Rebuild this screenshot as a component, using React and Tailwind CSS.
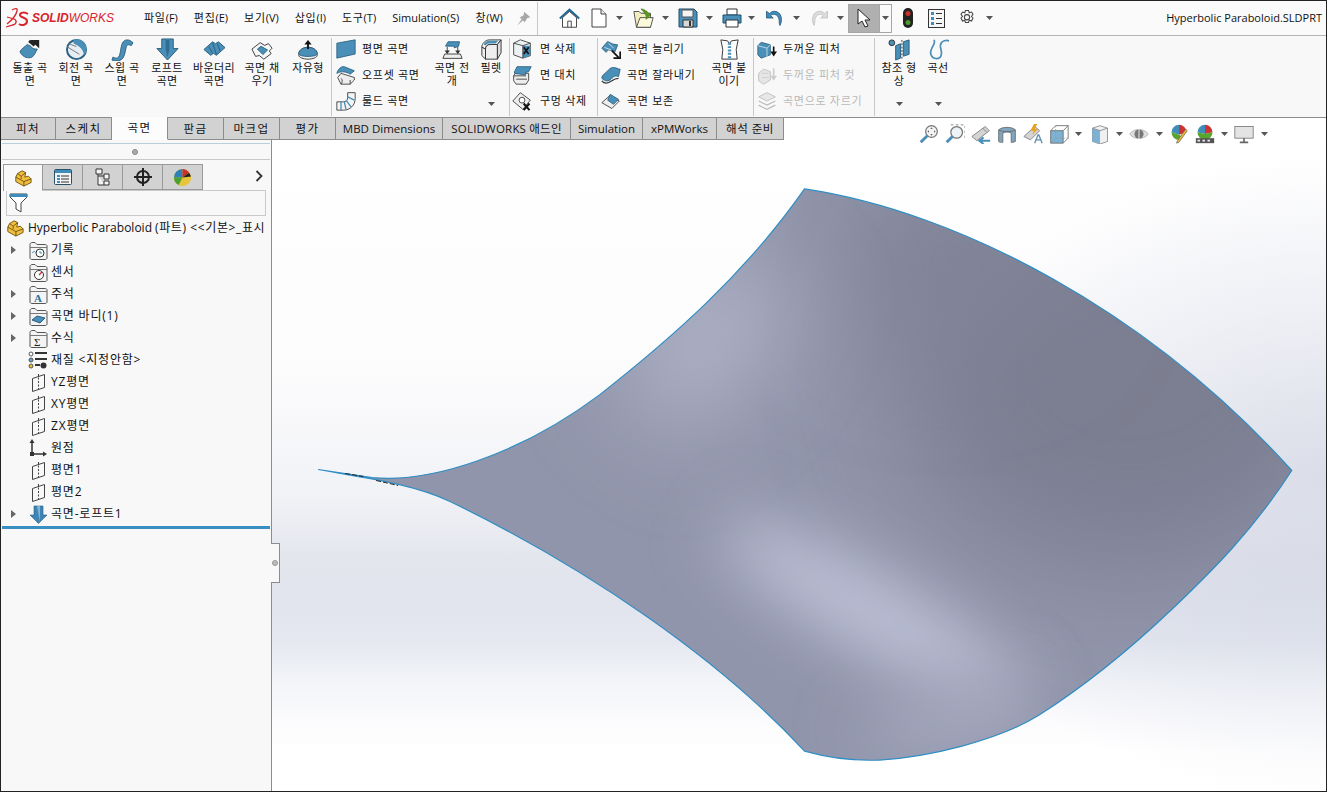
import React from "react";

const font = { fontFamily: '"Open Sans", "Noto Sans CJK KR", sans-serif' };

const Caret = ({ className = "" }) => (
  <svg width="7" height="4" viewBox="0 0 7 4" className={`shrink-0 ${className}`}>
    <path d="M0 0h7L3.5 4z" fill="#555" />
  </svg>
);

const Ico = ({ size = 20, children, className = "" }) => (
  <svg width={size} height={size} viewBox="0 0 24 24" className={`shrink-0 ${className}`}>
    {children}
  </svg>
);

const B = "#4a8fb8";
const BD = "#2a5f80";
const K = "#333";

// ribbon icons
const icons = {
  extrude: (
    <Ico size={22}>
      <path d="M1 14c2-4 5-5 8-8l4 2c1 3 5 3 7 3-2 3-3 7-6 9-4 1-9 1-13-6z" fill={B} stroke={BD} />
      <path d="M12 1l10 9V1z" fill="#222" />
      <path d="M11 2l6 5" stroke="#222" strokeWidth="3" />
    </Ico>
  ),
  revolve: (
    <Ico size={23}>
      <circle cx="12" cy="12" r="10" fill="#e6eef3" stroke={BD} strokeWidth="2" />
      <path d="M9 2a10 10 0 0 1 11 16c-1-6-5-10-11-12z" fill={B} />
      <path d="M2 9l13 8M4 6l8 3" stroke="#777" />
    </Ico>
  ),
  sweep: (
    <Ico size={23}>
      <path d="M2 20c6 3 7-1 8-7s2-11 7-11c2 0 4 1 6 3l-2 3c-2-1-4-2-5 1s-1 7-3 11-8 5-12 3z" fill={B} stroke={BD} />
    </Ico>
  ),
  loft: (
    <Ico size={23}>
      <path d="M6 1h12v10h5L12 23 1 11h5z" fill={B} stroke={BD} />
      <path d="M10 2v10l2 8 2-8V2" fill="#2f6d93" />
    </Ico>
  ),
  boundary: (
    <Ico size={23}>
      <path d="M1 12l9-8 3 2 3-2 7 6-9 8-3-2-3 2z" fill={B} stroke={BD} />
      <path d="M10 5l4 12M15 6l3 8M6 9l4 7" stroke={BD} />
    </Ico>
  ),
  fill: (
    <Ico size={22}>
      <path d="M1 11l9-7 5 3 4-2 4 5-3 3 2 3-8 6-5-4-4 1z" fill="#f6f6f6" stroke={K} />
      <path d="M7 11l4-3 7 4-5 5z" fill={B} stroke={BD} />
    </Ico>
  ),
  freeform: (
    <Ico size={22}>
      <path d="M2 16c0-4 5-7 10-7s10 3 10 7v2c0 2-5 4-10 4S2 20 2 18z" fill="#f2f2f2" stroke={K} />
      <path d="M2 16c0-4 5-7 10-7s10 3 10 7c0 2-5 3-10 3S2 18 2 16z" fill={B} stroke={BD} />
      <path d="M12 11V4" stroke="#111" strokeWidth="2" />
      <path d="M8 6l4-5 4 5z" fill="#111" />
    </Ico>
  ),
  planar: (
    <Ico size={20}>
      <path d="M1 5l22-4v17L1 23z" fill={B} stroke={BD} />
    </Ico>
  ),
  offset: (
    <Ico size={20}>
      <path d="M2 15l4-5 16 5v3l-5 5H6z" fill="#eee" stroke={K} />
      <path d="M6 16c2 2 2 4 0 7M17 18v5" fill="none" stroke={K} />
      <path d="M1 10c1-5 6-9 9-8l12 5-5 4c-5-3-10-4-16-1z" fill={B} stroke={BD} />
    </Ico>
  ),
  ruled: (
    <Ico size={20}>
      <path d="M1 13h8c3 0 5-2 5-5V2h9v7c0 8-6 14-14 14H1z" fill="#f4f4f4" stroke={K} />
      <path d="M6 13v10M10 13l2 9M12 11l6 8M14 7l8 4" stroke={B} strokeWidth="1.6" />
    </Ico>
  ),
  flatten: (
    <Ico size={21}>
      <path d="M4 7l3-5h13l-1 5-5 2v-2z" fill={B} stroke={BD} />
      <path d="M3 16h18l2 5H1z" fill="#eee" stroke={K} />
      <path d="M6 8v7M18 8v7" stroke={K} />
      <path d="M3 12l3 4 3-4zM15 12l3 4 3-4z" fill={K} />
    </Ico>
  ),
  fillet: (
    <Ico size={22}>
      <path d="M2 9c0-4 4-8 8-8h13l-4 5H11c-3 0-5 2-5 5z" fill="#f4f4f4" stroke={K} />
      <path d="M2 9l4 2v11l-4-4zM6 11c0-3 2-5 5-5h8v16H6z" fill="#eee" stroke={K} />
      <path d="M19 6l4-5v14l-4 7z" fill="#ddd" stroke={K} />
      <path d="M4 6c1-2 3-4 6-4h10l-3 3h-7c-2 0-3 1-4 2z" fill={B} />
    </Ico>
  ),
  delFace: (
    <Ico size={20}>
      <path d="M2 5l8-4 12 4v15l-9 3-11-4z" fill="#eef1f4" stroke={K} />
      <path d="M13 8h9v12l-9 3z" fill={B} />
      <path d="M14 10l6 8M20 10l-6 8" stroke="#111" strokeWidth="2" />
      <path d="M2 5l11 3v15M13 8l9-3" fill="none" stroke={K} />
    </Ico>
  ),
  replaceFace: (
    <Ico size={20}>
      <path d="M2 13l2-3h16v8l-3 5H5l-3-4z" fill="#eee" stroke={K} />
      <path d="M2 13h15M5 17h13" stroke={K} />
      <path d="M3 8l3-6h17l-3 6-4 1v3L3 10z" fill={B} stroke={BD} />
    </Ico>
  ),
  delHole: (
    <Ico size={20}>
      <path d="M1 12l9-10 12 9-9 11z" fill="#eee" stroke={K} />
      <circle cx="12" cy="11" r="3.5" fill="#fff" stroke={K} />
      <path d="M14 15l7 8M21 15l-7 8" stroke="#111" strokeWidth="2.4" />
    </Ico>
  ),
  extend: (
    <Ico size={20}>
      <path d="M1 11l7-8 6 3 6 1-3 8-8-2-3 3z" fill={B} stroke={BD} />
      <path d="M4 10l8 3M9 5l6 6" stroke="#dfeaf1" />
      <path d="M13 14l8 8M23 15v8h-8" fill="none" stroke="#111" strokeWidth="2" />
    </Ico>
  ),
  trim: (
    <Ico size={20}>
      <path d="M1 16c0-4 3-5 6-8s4-5 8-5 5 2 8 2l-2 9c-4-2-6 0-9 3s-7 3-11-1z" fill={B} stroke={BD} />
      <path d="M1 19c4 5 8 3 12 0s5-3 8-3" fill="none" stroke={K} strokeWidth="1.5" />
    </Ico>
  ),
  untrim: (
    <Ico size={20}>
      <path d="M1 14l9-8 12 6-9 9z" fill="#eee" stroke={K} />
      <path d="M11 4l10 6-6 6-7-5z" fill={B} stroke={BD} />
    </Ico>
  ),
  knit: (
    <Ico size={23}>
      <path d="M3 2l7 1 2 3 2-3 7-1-2 10 1 10H4l1-10z" fill="#fff" stroke={K} />
      <path d="M12 5v18" stroke={B} strokeWidth="3.5" strokeDasharray="2 1.5" />
    </Ico>
  ),
  thicken: (
    <Ico size={20}>
      <path d="M1 8l4-4 11 3v12l-11 4-4-4z" fill={B} stroke={BD} />
      <path d="M1 8l11 3 4-4M12 11v11" fill="none" stroke="#cfe0ea" />
      <path d="M20 9v9" stroke="#111" strokeWidth="2" />
      <path d="M16 15h8l-4 6z" fill="#111" />
    </Ico>
  ),
  thickenCut: (
    <Ico size={20}>
      <path d="M2 10l6-5 8 3v10l-8 5-6-4z" fill="#e6e6e6" stroke="#bbb" />
      <path d="M6 10h8M6 15h8" stroke="#ccc" />
      <path d="M20 4v11" stroke="#ccc" strokeWidth="2" />
      <path d="M16 13h8l-4 6z" fill="#ccc" />
    </Ico>
  ),
  cutSurface: (
    <Ico size={20}>
      <path d="M2 7l10-5 10 5-10 5z" fill="#e8e8e8" stroke="#bbb" />
      <path d="M2 12l10 5 10-5M2 17l10 5 10-5" fill="none" stroke="#bbb" strokeWidth="1.5" />
    </Ico>
  ),
  refGeom: (
    <Ico size={23}>
      <circle cx="4" cy="5" r="3" fill={B} stroke={K} />
      <path d="M8 8l5-2v15l-5 2zM16 4l6-2v15l-6 2z" fill={B} stroke={BD} />
      <path d="M14.500 2v21" stroke={K} strokeDasharray="2 1.500" />
    </Ico>
  ),
  curve: (
    <Ico size={23}>
      <path d="M7 2c4 3-5 9-3 15 2 6 10 6 11 0 1-5-3-8 0-12 1-2 5-3 8-2" fill="none" stroke={B} strokeWidth="1.800" />
    </Ico>
  ),
};

const Logo = () => (
  <div className="flex items-center gap-[2px] ml-[4px] w-[121px] shrink-0">
    <svg width="25" height="22" viewBox="0 0 25 22">
      <path d="M7 3c3-2 6-2 5 1-1 4-5 9-10 13M2 10l7 2c3 1 3 5-1 6l-7 2" fill="none" stroke="#d8232a" strokeWidth="1.3" />
      <path d="M23 7c-3-2-8-2-8 1s7 2 7 6-5 5-8 3" fill="none" stroke="#d8232a" strokeWidth="2" />
    </svg>
    <span
      className="text-[12px] font-bold text-[#d8232a] italic whitespace-nowrap"
      style={{ fontFamily: '"Liberation Sans", sans-serif' }}
    >
      SOLID<span className="font-normal">WORKS</span>
    </span>
  </div>
);

const menus = [
  ["파일", "(F)", "tracking-[0.7px]"],
  ["편집", "(E)", "tracking-[0.7px]"],
  ["보기", "(V)", "tracking-[0.7px]"],
  ["삽입", "(I)", "tracking-[0.7px]"],
  ["도구", "(T)", "tracking-[0.7px]"],
  ["Simulation", "(S)", ""],
  ["창", "(W)", "tracking-[0.7px]"],
];

const ToolBtn = ({ children, caret, gap = "ml-[5px]" }) => (
  <div className="flex items-center shrink-0">
    {children}
    {caret && <Caret className={gap} />}
  </div>
);

const TitleBar = () => (
  <div className="flex items-center h-[35px] border-b border-[#b4b4b4] bg-[#fafafa] shrink-0">
    <Logo />
    <div className="flex items-center gap-4 ml-[18px] text-[11px] text-[#111] whitespace-nowrap">
      {menus.map(([a, b, t]) => (
        <span key={a}>
          <span className={t}>{a}</span>
          <span>{b}</span>
        </span>
      ))}
    </div>
    <svg width="15" height="15" viewBox="0 0 24 24" className="ml-[13px] shrink-0">
      <path d="M13 1l10 9-5 1-4 7-3-3-9 8 7-10-3-3 6-3z" fill="#a8a8a8" />
    </svg>
    <div className="w-px h-[33px] bg-[#c8c8c8] ml-[6px]" />
    <div className="flex items-center ml-[21px] h-full">
      <ToolBtn>
        <svg width="21" height="21" viewBox="0 0 24 24">
          <path d="M1 12L12 2l11 10" fill="none" stroke="#1e6a94" strokeWidth="2.5" />
          <path d="M4 11v11h16V11L12 4z" fill="#fff" stroke="#333" />
          <path d="M10 22v-7h4v7" fill="none" stroke="#333" />
        </svg>
      </ToolBtn>
      <div className="ml-[10px]">
        <ToolBtn caret gap="ml-[8px]">
          <svg width="18" height="20" viewBox="0 0 18 20">
            <path d="M2 1h9l5 5v13H2z" fill="#fff" stroke="#444" />
            <path d="M11 1v5h5" fill="#eee" stroke="#444" />
          </svg>
        </ToolBtn>
      </div>
      <div className="ml-[10px]">
        <ToolBtn caret gap="ml-[8px]">
          <svg width="21" height="21" viewBox="0 0 24 24">
            <path d="M1 4h6l2 2h11v16H4z" fill="#f3eec0" stroke="#444" />
            <path d="M4 22l4-11h15l-3 11z" fill="#fbf8dc" stroke="#444" />
            <path d="M9 1c4 0 6 2 6 4V3l5 5-5 5v-3c0-2-2-5-6-9z" fill="#5a9a1a" stroke="#3b7010" strokeWidth=".6" />
          </svg>
        </ToolBtn>
      </div>
      <div className="ml-[9px]">
        <ToolBtn caret gap="ml-[8px]">
          <svg width="20" height="20" viewBox="0 0 20 20">
            <path d="M1 1h15l3 3v15H1z" fill="#4a8fb8" stroke="#1d4f6f" />
            <path d="M4 2h11v7H4z" fill="#f4f4f4" stroke="#555" />
            <path d="M5 12h10v7H5z" fill="#d8d8d8" stroke="#333" />
            <path d="M11 13v5h2v-5z" fill="#333" />
          </svg>
        </ToolBtn>
      </div>
      <div className="ml-[9px]">
        <ToolBtn caret gap="ml-[6px]">
          <svg width="20" height="20" viewBox="0 0 20 20">
            <path d="M5 1h10v6H5z" fill="#fff" stroke="#333" />
            <path d="M1 7h18v8H1z" fill="#4a8fb8" stroke="#1d4f6f" />
            <path d="M4 12h12v7H4z" fill="#fff" stroke="#333" />
          </svg>
        </ToolBtn>
      </div>
      <div className="ml-[10px]">
        <ToolBtn caret gap="ml-[10px]">
          <svg width="18" height="18" viewBox="0 0 24 24">
            <path d="M2 3v9h9L7.5 9C11 5 20 7 19 19l1 3c4-8 2-18-7-19-3 0-5 1-7 3z" fill="#3f8dbb" stroke="#1d4f6f" />
          </svg>
        </ToolBtn>
      </div>
      <div className="ml-[11px]">
        <ToolBtn caret gap="ml-[8px]">
          <svg width="18" height="18" viewBox="0 0 24 24">
            <path d="M22 3v9h-9l3.5-3C13 5 4 7 5 19l-1 3C0 14 2 4 11 3c3 0 5 1 7 3z" fill="#dcdcdc" stroke="#bdbdbd" />
          </svg>
        </ToolBtn>
      </div>
      <div className="flex items-center ml-[4px] h-[29px] border border-[#a6a6a6]">
        <div className="w-[30px] h-full bg-[#b0b0b0] flex items-center justify-center">
          <svg width="14" height="20" viewBox="0 0 14 20">
            <path d="M1 1v15l4-3 3 6 3-1-3-6h5z" fill="#fff" stroke="#222" />
          </svg>
        </div>
        <div className="w-[12px] flex justify-center border-l border-[#a6a6a6] h-full items-center">
          <Caret />
        </div>
      </div>
      <svg width="12" height="22" viewBox="0 0 12 22" className="ml-[10px]">
        <rect x="1" y="1" width="10" height="20" rx="5" fill="#222" />
        <circle cx="6" cy="6.5" r="2.5" fill="#c8312a" />
        <circle cx="6" cy="15.5" r="2.5" fill="#4d9a2a" />
      </svg>
      <svg width="17" height="19" viewBox="0 0 17 19" className="ml-[14px]">
        <rect x=".5" y=".5" width="16" height="18" fill="#f6f6f6" stroke="#333" />
        <path d="M3 3h3v3H3zM3 8h3v3H3zM3 13h3v3H3z" fill="#3f8dbb" />
        <path d="M8 4.500h6M8 9.500h6M8 14.500h6" stroke="#333" />
      </svg>
      <svg width="18" height="18" viewBox="0 0 24 24" className="ml-[13px]" fill="none" stroke="#444" strokeWidth="1.4">
        <path d="M10 2h4l1 3 3-1 2 3-2 3 2 2-2 4-3-1-1 3h-4l-1-3-3 1-2-4 2-2-2-3 2-3 3 1z" />
        <circle cx="12" cy="11" r="3.500" />
      </svg>
      <Caret className="ml-[10px]" />
    </div>
    <span className="ml-auto mr-[4px] text-[11px] text-[#111] whitespace-nowrap">Hyperbolic Paraboloid.SLDPRT</span>
  </div>
);

const Col = ({ icon, lines, w = "w-[46px]" }) => (
  <div className={`flex flex-col items-center shrink-0 ${w}`}>
    <div className="h-[24px] flex items-end justify-center">{icon}</div>
    <div className="text-[11px] leading-[13px] text-center tracking-[0.4px] whitespace-nowrap text-[#111]">
      {lines.map((l) => (
        <div key={l}>{l}</div>
      ))}
    </div>
  </div>
);

const Row = ({ icon, label, off, gap = "gap-[5px]" }) => (
  <div className={`flex items-center h-[26px] ${gap}`}>
    <div className="w-[22px] flex justify-center">{icon}</div>
    <span className={`text-[11px] tracking-[0.7px] whitespace-nowrap ${off ? "text-[#b9b9b9]" : "text-[#111]"}`}>{label}</span>
  </div>
);

const Sep = () => <div className="w-px h-[78px] bg-[#c8c8c8] self-center shrink-0" />;

const Ribbon = () => (
  <div className="flex h-[82px] bg-[#f8f8f8] shrink-0 border-b border-[#8c8c8c]">
    <div className="flex pl-[6px] pt-[1px] w-[330px] shrink-0">
      <Col icon={icons.extrude} lines={["돌출 곡", "면"]} />
      <Col icon={icons.revolve} lines={["회전 곡", "면"]} />
      <Col icon={icons.sweep} lines={["스윕 곡", "면"]} />
      <Col icon={icons.loft} lines={["로프트", "곡면"]} w="w-[44px]" />
      <Col icon={icons.boundary} lines={["바운더리", "곡면"]} w="w-[50px]" />
      <Col icon={icons.fill} lines={["곡면 채", "우기"]} />
      <Col icon={icons.freeform} lines={["자유형"]} />
    </div>
    <Sep />
    <div className="flex w-[177px] shrink-0 pl-[3px]">
      <div className="flex flex-col w-[93px] shrink-0">
        <Row icon={icons.planar} label="평면 곡면" />
        <Row icon={icons.offset} label="오프셋 곡면" />
        <Row icon={icons.ruled} label="룰드 곡면" />
      </div>
      <div className="flex pt-[1px] ml-[1px]">
        <Col icon={icons.flatten} lines={["곡면 전", "개"]} />
        <div className="flex flex-col items-center w-[32px] shrink-0">
          <Col icon={icons.fillet} lines={["필렛"]} w="w-[32px]" />
          <Caret className="mt-[28px]" />
        </div>
      </div>
    </div>
    <Sep />
    <div className="flex flex-col w-[87px] shrink-0 pl-[1px]">
      <Row icon={icons.delFace} label="면 삭제" gap="gap-[7px]" />
      <Row icon={icons.replaceFace} label="면 대치" gap="gap-[7px]" />
      <Row icon={icons.delHole} label="구멍 삭제" gap="gap-[7px]" />
    </div>
    <Sep />
    <div className="flex w-[155px] shrink-0 pl-[2px]">
      <div className="flex flex-col w-[106px] shrink-0">
        <Row icon={icons.extend} label="곡면 늘리기" />
        <Row icon={icons.trim} label="곡면 잘라내기" />
        <Row icon={icons.untrim} label="곡면 보존" />
      </div>
      <div className="pt-[1px]">
        <Col icon={icons.knit} lines={["곡면 붙", "이기"]} />
      </div>
    </div>
    <Sep />
    <div className="flex flex-col w-[120px] shrink-0 pl-[2px]">
      <Row icon={icons.thicken} label="두꺼운 피처" />
      <Row icon={icons.thickenCut} label="두꺼운 피처 컷" off />
      <Row icon={icons.cutSurface} label="곡면으로 자르기" off />
    </div>
    <Sep />
    <div className="flex pl-[2px] pt-[1px]">
      <div className="flex flex-col items-center w-[44px]">
        <Col icon={icons.refGeom} lines={["참조 형", "상"]} />
        <Caret className="mt-[15px]" />
      </div>
      <div className="flex flex-col items-center w-[34px]">
        <Col icon={icons.curve} lines={["곡선"]} w="w-[34px]" />
        <Caret className="mt-[28px]" />
      </div>
    </div>
  </div>
);

const tabs = [
  ["피처", "w-[55px] tracking-[1.5px]"],
  ["스케치", "w-[56px] tracking-[1.5px]"],
  ["곡면", "w-[56px] tracking-[1.5px]", true],
  ["판금", "w-[56px] tracking-[1.5px]"],
  ["마크업", "w-[56px] tracking-[1.5px]"],
  ["평가", "w-[56px] tracking-[1.5px]"],
  ["MBD Dimensions", "w-[107px]"],
  ["SOLIDWORKS 애드인", "w-[128px] tracking-[0.2px]"],
  ["Simulation", "w-[72px]"],
  ["xPMWorks", "w-[74px]"],
  ["해석 준비", "w-[67px] tracking-[0.5px]"],
];

const Hud = () => (
  <div className="ml-auto flex items-center gap-[6px] mr-[58px] mt-[6px] h-[20px] shrink-0">
    <svg width="20" height="20" viewBox="0 0 24 24">
      <circle cx="15" cy="9" r="7" fill="#f4f4f4" stroke="#777" strokeWidth="1.5" />
      <path d="M10 14l-8 8" stroke="#4a8fb8" strokeWidth="3.500" />
      <path d="M15 4l-1.500 2h3zM15 14l-1.500-2h3zM10 9l2-1.500v3zM20 9l-2-1.500v3z" fill="#666" />
    </svg>
    <svg width="20" height="20" viewBox="0 0 24 24">
      <path d="M7 1h17v17" fill="none" stroke="#777" strokeDasharray="3 3" />
      <circle cx="14" cy="10" r="7" fill="#eef3f7" stroke="#777" strokeWidth="1.5" />
      <path d="M9 15l-7 7" stroke="#4a8fb8" strokeWidth="3.500" />
    </svg>
    <svg width="20" height="20" viewBox="0 0 24 24">
      <path d="M1 15L17 3l5 5L7 20z" fill="#d4d4d4" stroke="#777" />
      <path d="M14 5l5 5" stroke="#777" />
      <path d="M10 20h13M15 16l-5 4 5 4" stroke="#4a8fb8" strokeWidth="2.500" fill="none" />
    </svg>
    <svg width="20" height="20" viewBox="0 0 24 24">
      <path d="M2 7c4-4 16-4 20 0v14c-2 1-4 1-5 1V11c-3-2-7-2-10 0v11c-2 0-4 0-5-1z" fill="#7fa6c0" stroke="#666" />
      <path d="M2 7c4 3 16 3 20 0" fill="none" stroke="#666" />
    </svg>
    <svg width="20" height="20" viewBox="0 0 24 24">
      <path d="M1 15L14 3l6 5L9 19z" fill="#d4d4d4" stroke="#777" />
      <path d="M13 0l-4 8h4l-2 5 7-7h-4l3-6z" fill="#e9a21d" />
      <path d="M14 23l4-10h1l4 10M15.500 19h6" fill="none" stroke="#5d8fb0" strokeWidth="1.600" />
    </svg>
    <svg width="20" height="20" viewBox="0 0 24 24">
      <path d="M2 8h15v15H2z" fill="#7db2d4" stroke="#666" />
      <path d="M2 8l6-6h15v15l-6 6M17 8l6-6" fill="none" stroke="#666" />
      <path d="M8 2v15h15M8 17l-6 6" fill="none" stroke="#999" strokeDasharray="2 2" />
    </svg>
    <Caret className="mr-[2px]" />
    <svg width="20" height="20" viewBox="0 0 24 24">
      <path d="M3 5l9-3 9 3v16l-9 3-9-3z" fill="#eef0f2" stroke="#888" />
      <path d="M3 5l9 3v16l-9-3z" fill="#7db2d4" />
      <path d="M3 5l9 3 9-3" fill="none" stroke="#888" />
    </svg>
    <Caret />
    <svg width="20" height="20" viewBox="0 0 24 24">
      <path d="M1 12c4-7 18-7 22 0-4 7-18 7-22 0z" fill="#dedede" stroke="#aaa" />
      <circle cx="12" cy="12" r="5.500" fill="#777" />
      <path d="M12 3v18" stroke="#fff" strokeWidth="1" />
    </svg>
    <Caret className="ml-[1px]" />
    <svg width="20" height="20" viewBox="0 0 24 24">
      <path d="M12 1a9 9 0 0 1 9 9l-9 3z" fill="#c33" />
      <path d="M12 1a9 9 0 0 0-9 9l9 3z" fill="#3f8dbb" />
      <path d="M3 10a9 9 0 0 0 9 9l3-4-3-2z" fill="#58a52c" />
      <path d="M22 8L12 22l-3 1 1-3L20 6z" fill="#e6b63a" stroke="#555" strokeWidth=".7" />
    </svg>
    <svg width="20" height="20" viewBox="0 0 24 24">
      <path d="M12 1a9 9 0 0 1 9 9l-9 2z" fill="#c33" />
      <path d="M12 1a9 9 0 0 0-9 9l9 2z" fill="#3f8dbb" />
      <path d="M3 10a9 9 0 0 0 18 0l-9 2z" fill="#58a52c" />
      <path d="M1 17h22v6H1z" fill="#555" />
      <path d="M3 19h3v2H3zM9 19h3v2H9zM15 19h3v2h-3z" fill="#eee" />
    </svg>
    <Caret />
    <svg width="20" height="20" viewBox="0 0 24 24">
      <rect x="1" y="3" width="22" height="14" fill="#e4e4e4" stroke="#777" />
      <path d="M12 17v4M7 22h10" stroke="#666" strokeWidth="2" />
    </svg>
    <Caret className="ml-[1px]" />
  </div>
);

const TabRow = () => (
  <div className="flex h-[22px] bg-white shrink-0 text-[11.5px] text-[#111] relative z-10">
    {tabs.map(([label, w, active]) => (
      <div
        key={label}
        className={`${w} shrink-0 flex items-center justify-center border-r border-b border-[#8c8c8c] whitespace-nowrap -mt-px ${
          active ? "bg-[#fcfcfc] border-b-transparent" : "bg-[#d2d2d2] border-t"
        }`}
      >
        {label}
      </div>
    ))}
    <Hud />
  </div>
);

const FolderIco = ({ children }) => (
  <svg width="19" height="19" viewBox="0 0 19 19">
    <path d="M1 3.500c0-1 1-2 2-2h3l2 2h8c1 0 2 .5 2 1.500v12c0 1-1 1.500-2 1.500H3c-1 0-2-.5-2-1.500z" fill="#f4f4f4" stroke="#555" />
    <path d="M1 6.500h17" stroke="#777" />
    {children}
  </svg>
);

const PlaneIco = () => (
  <svg width="15" height="19" viewBox="0 0 15 19">
    <path d="M1.500 5.500l12-4v13l-12 4z" fill="none" stroke="#444" />
    <path d="M7.500 1v17" stroke="#444" strokeDasharray="2 1.500" />
  </svg>
);

const Part = ({ size = 19 }) => (
  <svg width={size} height={size} viewBox="0 0 20 20">
    <path d="M2 9L4 5l5-3 4 2-1 5 4-1 3 3v4l-8 4-9-5z" fill="#f1bf3d" stroke="#6b5012" strokeLinejoin="round" />
    <path d="M2 9l9 5 8-3M11 14v5M4 5l4 3 5-4M8 8v3" fill="none" stroke="#6b5012" />
  </svg>
);

const treeItems = [
  { label: "기록", arrow: true, icon: <FolderIco><circle cx="11" cy="12" r="4" fill="#fff" stroke="#333" /><path d="M11 10v2h2M3 12c2-2 3-2 4 0" stroke="#3f8dbb" fill="none" /></FolderIco> },
  { label: "센서", icon: <FolderIco><circle cx="10" cy="12" r="4.500" fill="#fff" stroke="#333" /><path d="M10 12l3-3" stroke="#c33" strokeWidth="1.500" /></FolderIco> },
  { label: "주석", arrow: true, icon: <FolderIco><text x="5" y="17" fontSize="11" fontWeight="bold" fill="#2a6f9c" fontFamily="Liberation Serif">A</text></FolderIco> },
  { label: "곡면 바디(1)", arrow: true, icon: <FolderIco><path d="M3 13l5-4 8 2-5 5z" fill="#4a8fb8" stroke="#2a5f80" /></FolderIco> },
  { label: "수식", arrow: true, icon: <FolderIco><text x="5" y="17" fontSize="11" fill="#222" fontFamily="Liberation Serif">Σ</text></FolderIco> },
  {
    label: "재질 <지정안함>",
    icon: (
      <svg width="20" height="20" viewBox="0 0 20 20">
        <circle cx="3" cy="4" r="2" fill="#fff" stroke="#555" />
        <circle cx="3" cy="10" r="2" fill="#5fa0cc" stroke="#555" />
        <circle cx="3" cy="16" r="2" fill="#f0c030" stroke="#555" />
        <path d="M7 3h12M7 9h12M7 15h5" stroke="#333" strokeWidth="2" />
        <circle cx="15.500" cy="15.500" r="3" fill="#333" />
      </svg>
    ),
  },
  { label: "YZ평면", icon: <PlaneIco /> },
  { label: "XY평면", icon: <PlaneIco /> },
  { label: "ZX평면", icon: <PlaneIco /> },
  {
    label: "원점",
    icon: (
      <svg width="18" height="19" viewBox="0 0 18 19">
        <path d="M3 15V3M3 15h12" stroke="#333" strokeWidth="1.500" />
        <path d="M3 0l2.500 4h-5zM18 15l-4 2.500v-5z" fill="#333" />
        <rect x="1" y="13" width="4" height="4" fill="#333" />
      </svg>
    ),
  },
  { label: "평면1", icon: <PlaneIco /> },
  { label: "평면2", icon: <PlaneIco /> },
  {
    label: "곡면-로프트1",
    arrow: true,
    icon: (
      <svg width="17" height="19" viewBox="0 0 17 19">
        <path d="M4 1h9v9h4l-8.500 8.500L0 10h4z" fill="#3f84b4" stroke="#2a5f80" strokeWidth=".6" />
        <path d="M7 1h3v16" fill="#7fb4d6" />
      </svg>
    ),
  },
];

const Panel = () => (
  <div className="relative w-[271px] shrink-0 bg-[#f8f8f8] border-r border-[#8c8c8c] flex flex-col">
    <div className="h-[3px] mt-[1px] mx-[1px] border-b border-[#b9d0dc]" />
    <div className="h-[16px] flex items-center justify-center border-b border-[#c8c8c8] mx-[1px]">
      <div className="w-[6px] h-[6px] rounded-full bg-[#aaa] border border-[#888] mr-[3px]" />
    </div>
    <div className="flex items-start mt-[4px] h-[27px] relative">
      <div className="ml-[2px] w-[39px] h-[27px] border border-b-0 border-[#9a9a9a] border-r-0 flex items-center justify-center bg-[#f8f8f8]">
        <Part size={18} />
      </div>
      {[
        <svg key="a" width="18" height="16" viewBox="0 0 18 16"><rect x=".5" y=".5" width="17" height="15" rx="1" fill="#f4f4f4" stroke="#2a4f66" /><path d="M1 1h16v3H1z" fill="#3f8dbb" /><path d="M3 6h3v2H3zM3 9h3v2H3zM3 12h3v2H3z" fill="#3f8dbb" /><path d="M7 7h8M7 10h8M7 13h8" stroke="#333" /></svg>,
        <svg key="b" width="15" height="18" viewBox="0 0 15 18"><path d="M1 1h6v5H1zM9 6h5v5H9zM9 13h5v4H9zM3 6v11h6M3 8h6" fill="#f4f4f4" stroke="#333" /></svg>,
        <svg key="c" width="18" height="18" viewBox="0 0 18 18"><circle cx="9" cy="9" r="6" fill="none" stroke="#222" strokeWidth="2" /><path d="M9 0v18M0 9h18" stroke="#222" strokeWidth="2" /></svg>,
        <svg key="d" width="19" height="19" viewBox="0 0 20 20"><circle cx="10" cy="10" r="9" fill="#e8c43a" /><path d="M10 10L10 1a9 9 0 0 0-9 9z" fill="#2f7fb8" /><path d="M10 10V1a9 9 0 0 1 7 4z" fill="#c93030" /><path d="M10 10L1 10a9 9 0 0 0 5 8z" fill="#4aa032" /><path d="M10 10l7-5 2 4z" fill="#222" /></svg>,
      ].map((ic) => (
        <div key={ic.key} className="w-[40px] h-[26px] bg-[#d2d2d2] border border-[#9a9a9a] border-r-0 flex items-center justify-center">
          {ic}
        </div>
      ))}
      <div className="w-[1px] h-[26px] bg-[#9a9a9a]" />
      <svg width="8" height="12" viewBox="0 0 8 12" className="ml-[52px] mt-[6px]">
        <path d="M1.500 1l5 5-5 5" fill="none" stroke="#333" strokeWidth="1.800" />
      </svg>
    </div>
    <div className="mx-[5px] h-[26px] border border-[#c9c9c9] flex items-center pl-[2px] -mt-px bg-[#f8f8f8]">
      <svg width="19" height="20" viewBox="0 0 19 20">
        <path d="M1 1h17v3l-6 6v9l-5-3v-6L1 4z" fill="#fff" stroke="#444" />
        <path d="M1 1h17v3H1z" fill="#3f8dbb" />
      </svg>
    </div>
    <div className="flex items-center h-[22px] mt-[1px] pl-[5px] gap-[4px] text-[12px] text-[#111] whitespace-nowrap overflow-hidden">
      <Part size={18} />
      <span>
        Hyperbolic Paraboloid <span className="tracking-[0.6px]">(파트) &lt;&lt;기본&gt;_표시</span>
      </span>
    </div>
    <div className="flex flex-col">
      {treeItems.map((t) => (
        <div key={t.label} className="flex items-center h-[22px] text-[12px] tracking-[0.8px] text-[#111] whitespace-nowrap">
          <div className="w-[27px] pl-[10px] shrink-0">
            {t.arrow && (
              <svg width="5" height="8" viewBox="0 0 5 8">
                <path d="M0 0l5 4-5 4z" fill="#666" />
              </svg>
            )}
          </div>
          <div className="w-[20px] flex justify-center shrink-0">{t.icon}</div>
          <span className="ml-[3px]">{t.label}</span>
        </div>
      ))}
    </div>
    <div className="mx-[1px] mt-[1px] h-[3px] bg-[#3a8fc2]" />
    <div className="absolute left-[270px] top-[403px] w-[9px] h-[40px] bg-[#f8f8f8] border border-l-0 border-[#8c8c8c] flex items-center justify-center">
      <div className="w-[6px] h-[6px] rounded-full bg-[#bbb] border border-[#999]" />
    </div>
  </div>
);

const edge =
  "M318 470 L372 478 C430 484 520 455 600 395 C670 340 745 275 805 189 C960 212 1150 312 1293 471 C1255 530 1215 570 1173 610 C1130 651 1090 684 1040 716 C1000 741 930 758 880 761 C855 762 830 759 805 752 C720 660 590 570 450 502 C410 483 355 477 318 470Z";

const Surface = () => (
  <svg viewBox="272 140 1055 652" className="block w-full h-full">
    <defs>
      <clipPath id="sf">
        <path d={edge} />
      </clipPath>
      <filter id="b1" x="-100%" y="-100%" width="300%" height="300%">
        <feGaussianBlur stdDeviation="60" />
      </filter>
      <filter id="b2" x="-100%" y="-100%" width="300%" height="300%">
        <feGaussianBlur stdDeviation="32" />
      </filter>
      <filter id="b3" x="-150%" y="-150%" width="400%" height="400%">
        <feGaussianBlur stdDeviation="48" />
      </filter>
    </defs>
    <g clipPath="url(#sf)">
      <rect x="272" y="140" width="1055" height="652" fill="#9195ab" />
      <ellipse cx="1130" cy="380" rx="230" ry="190" fill="#7b7e91" filter="url(#b1)" />
      <ellipse cx="950" cy="260" rx="110" ry="80" fill="#7f8295" filter="url(#b1)" />
      <ellipse cx="705" cy="340" rx="55" ry="100" transform="rotate(40 705 340)" fill="#b2b6ca" filter="url(#b3)" />
      <ellipse cx="870" cy="612" rx="170" ry="34" transform="rotate(30 870 612)" fill="#c2c6dc" filter="url(#b2)" />
      <ellipse cx="950" cy="720" rx="90" ry="30" transform="rotate(-15 950 720)" fill="#a4a8be" filter="url(#b2)" />
    </g>
    <path d={edge} fill="none" stroke="#2f8ec4" strokeWidth="1.200" />
    <path d="M345 474l18 3M376 481l22 5" stroke="#222" strokeWidth="1" strokeDasharray="5 2" />
  </svg>
);

export default function App() {
  return (
    <div className="w-[1327px] h-[792px] overflow-hidden flex flex-col border border-[#222] bg-white" style={font}>
      <TitleBar />
      <Ribbon />
      <TabRow />
      <div className="flex flex-1 min-h-0">
        <Panel />
        <div className="flex-1 min-w-0 bg-[radial-gradient(ellipse_420px_320px_at_100%_52%,rgba(208,212,226,0.7),rgba(208,212,226,0)),linear-gradient(180deg,#ffffff_0%,#fcfcfd_35%,#f1f2f6_55%,#e4e6ee_64%,#e1e4ed_70%,#e5e8f0_77%,#f2f4f8_83%,#fbfbfd_89%,#ffffff_94%)]">
          <Surface />
        </div>
      </div>
    </div>
  );
}
